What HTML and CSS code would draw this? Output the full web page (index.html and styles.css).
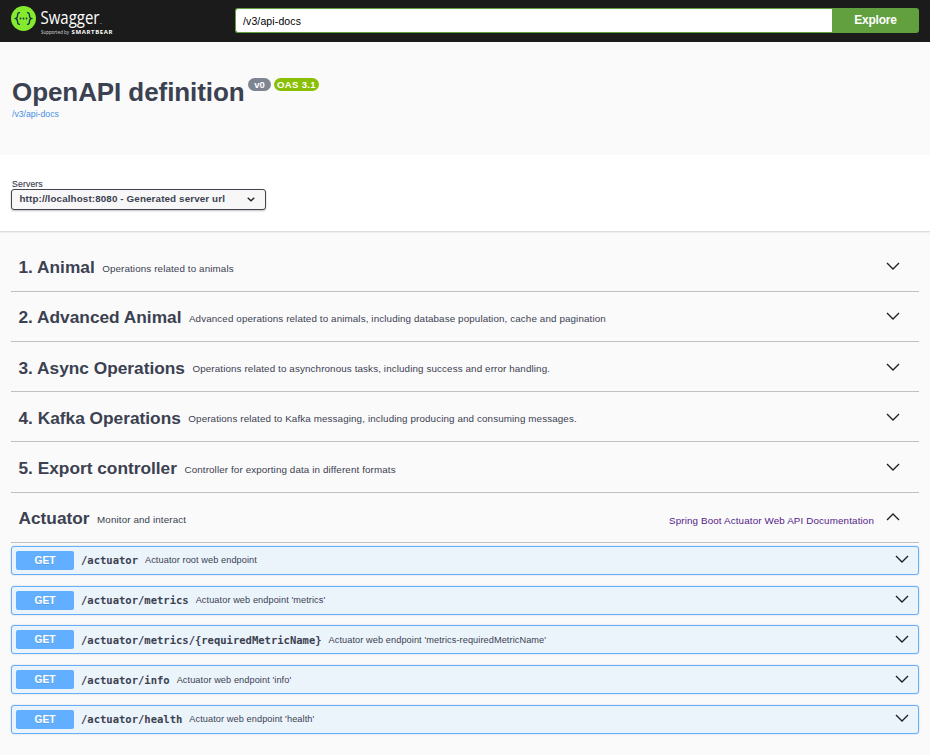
FILE: index.html
```html
<!DOCTYPE html>
<html lang="en">
<head>
<meta charset="utf-8">
<title>Swagger UI</title>
<link rel="stylesheet" href="styles.css">
</head>
<body>
<svg class="defs" width="0" height="0"><symbol id="chevron" viewBox="0 0 14 8"><path d="M1 1l6 6 6-6" fill="none" stroke="#202124" stroke-width="1.35"/></symbol></svg>
<header class="topbar">
  <svg class="logo" width="104" height="36" viewBox="0 0 104 36">
    <circle cx="12.5" cy="14.5" r="12.5" fill="#85ea2d"/>
    <g fill="none" stroke="#173647" stroke-width="1.35">
      <path d="M9 8.7c-2-.1-2.4.7-2.4 2.2 0 2.2-.1 3-1.8 3.6 1.7.6 1.8 1.4 1.8 3.6 0 1.5.4 2.3 2.4 2.2M16 8.7c2-.1 2.4.7 2.4 2.2 0 2.2.1 3 1.8 3.6-1.7.6-1.8 1.4-1.8 3.6 0 1.5-.4 2.3-2.4 2.2"/>
    </g>
    <g fill="#173647"><circle cx="9.5" cy="14.5" r=".9"/><circle cx="12.500" cy="14.5" r=".9"/><circle cx="15.5" cy="14.5" r=".9"/></g>
    <text class="brand" x="29.5" y="20" textLength="59" lengthAdjust="spacingAndGlyphs">Swagger</text>
    <circle cx="90" cy="19.5" r=".6" fill="#aaa"/>
    <text class="support" x="30" y="29.5" textLength="28" lengthAdjust="spacingAndGlyphs">Supported by</text>
    <text class="bear" x="60.5" y="29.5" textLength="41" lengthAdjust="spacing">SMARTBEAR</text>
  </svg>
  <form class="search"><input class="url" type="text" value="/v3/api-docs" aria-label="Definition URL"><button class="explore" type="button">Explore</button></form>
</header>
<section class="info">
  <h1 class="title">OpenAPI definition</h1><span class="badge version">v0</span><span class="badge oas">OAS 3.1</span>
  <a class="doc-link">/v3/api-docs</a>
</section>
<section class="servers">
  <span class="servers-label">Servers</span>
  <div class="select"><span>http://localhost:8080 - Generated server url</span><svg width="8" height="5" viewBox="0 0 8 5"><path d="M.7.7l3.300 3 3.300-3" fill="none" stroke="#222" stroke-width="1.4"/></svg></div>
</section>
<main class="tags">
  <div class="tag"><h2>1. Animal</h2><p>Operations related to animals</p><svg class="chev"><use href="#chevron"/></svg></div>
  <div class="tag"><h2>2. Advanced Animal</h2><p>Advanced operations related to animals, including database population, cache and pagination</p><svg class="chev"><use href="#chevron"/></svg></div>
  <div class="tag"><h2>3. Async Operations</h2><p>Operations related to asynchronous tasks, including success and error handling.</p><svg class="chev"><use href="#chevron"/></svg></div>
  <div class="tag"><h2>4. Kafka Operations</h2><p>Operations related to Kafka messaging, including producing and consuming messages.</p><svg class="chev"><use href="#chevron"/></svg></div>
  <div class="tag"><h2>5. Export controller</h2><p>Controller for exporting data in different formats</p><svg class="chev"><use href="#chevron"/></svg></div>
  <div class="tag"><h2>Actuator</h2><p>Monitor and interact</p><a class="external">Spring Boot Actuator Web API Documentation</a><svg class="chev up"><use href="#chevron"/></svg></div>
  <div class="operations">
    <div class="op"><b class="method">GET</b><code>/actuator</code><span class="summary">Actuator root web endpoint</span><svg class="chev"><use href="#chevron"/></svg></div>
    <div class="op"><b class="method">GET</b><code>/actuator/metrics</code><span class="summary">Actuator web endpoint 'metrics'</span><svg class="chev"><use href="#chevron"/></svg></div>
    <div class="op"><b class="method">GET</b><code>/actuator/metrics/{requiredMetricName}</code><span class="summary">Actuator web endpoint 'metrics-requiredMetricName'</span><svg class="chev"><use href="#chevron"/></svg></div>
    <div class="op"><b class="method">GET</b><code>/actuator/info</code><span class="summary">Actuator web endpoint 'info'</span><svg class="chev"><use href="#chevron"/></svg></div>
    <div class="op"><b class="method">GET</b><code>/actuator/health</code><span class="summary">Actuator web endpoint 'health'</span><svg class="chev"><use href="#chevron"/></svg></div>
  </div>
</main>
</body>
</html>
```
FILE: styles.css
```css
* { box-sizing: border-box; }
body { margin: 0; height: 755px; overflow: hidden; background: #fafafa; color: #3b4151; font-family: "Liberation Sans", Arial, sans-serif; }
h1, h2, p { margin: 0; }
.defs { position: absolute; }
.topbar { height: 42px; background: #1b1b1b; display: flex; align-items: flex-start; padding: 4px 11px 0; }
.logo { display: block; flex: none; }
.brand { font: 17.5px "Open Sans", sans-serif; fill: #fff; }
.support { font: 5px "Open Sans", sans-serif; fill: #ddd; }
.bear { font: bold 6px "Open Sans", sans-serif; fill: #fff; }
.search { display: flex; width: 684px; margin: 4px 0 0 auto; height: 25px; }
.url { flex: 1; min-width: 0; border: 1px solid #62a03f; border-width: 1px 0 1px 1px; border-radius: 3px 0 0 3px; padding: 0 7px; font: 10.5px "Liberation Sans", sans-serif; letter-spacing: .12px; color: #000; background: #fff; }
.explore { width: 87px; border: 0; border-radius: 0 3px 3px 0; background: #62a03f; color: #fff; font: bold 12px "Liberation Sans", sans-serif; letter-spacing: -.2px; padding: 0 0 2px; }
.info { height: 113px; padding: 33px 12px 0; display: grid; grid-template-columns: 232px auto auto 1fr; grid-template-rows: 34px 12px; align-items: start; }
.title { font-size: 26px; line-height: 34px; white-space: nowrap; letter-spacing: -.08px; }
.badge { margin: 3px 0 0 4px; height: 13px; line-height: 13px; border-radius: 7px; color: #fff; font-size: 9.5px; font-weight: bold; text-align: center; }
.version { width: 23px; background: #7d8492; }
.oas { width: 45px; margin-left: 3px; background: #89bf04; letter-spacing: .35px; }
.doc-link { grid-column: 1; font-size: 8.7px; line-height: 12px; margin-top: -1px; color: #4990e2; }
.servers { height: 77px; background: #fff; border-bottom: 1px solid #dedede; padding: 24px 11px 0; box-shadow: 0 1px 1px rgba(0,0,0,.04); }
.servers-label { display: block; font-size: 8.7px; line-height: 10px; margin-left: 1px; letter-spacing: .13px; -webkit-text-stroke: .15px #3b4151; }
.select { width: 255px; height: 21px; border: 1px solid #41444e; border-radius: 3px; background: #f7f7f7; display: flex; align-items: center; justify-content: space-between; padding: 0 10px 1px 7.5px; font-size: 9.8px; letter-spacing: .13px; font-weight: bold; box-shadow: 0 1px 2px rgba(0,0,0,.25); }
.select span { margin-top: -1px; }
.tags { padding: 9.7px 11px 0; }
.tag { height: 50.2px; border-bottom: 1px solid #bfc0c3; display: flex; align-items: center; padding: 2px 19px 0 7.5px; white-space: nowrap; }
.tag h2 { font-size: 17.3px; line-height: 24px; margin-right: 7.5px; }
.tag p { font-size: 9.8px; letter-spacing: .122px; margin-top: 2px; }
.chev { width: 14px; height: 8px; margin-left: auto; flex: none; }
.tag .chev { margin-top: -2px; }
.external { font-size: 9.8px; letter-spacing: .14px; color: #551a8b; margin: 5px 12px 0 auto; }
.tag .up { margin-left: 0; transform: rotate(180deg); }
.operations { padding-top: 3px; display: flex; flex-direction: column; gap: 10.75px; }
.op { height: 29px; border: 1px solid #61affe; border-radius: 3px; background: #ebf3fb; box-shadow: 0 0 2px rgba(0,0,0,.19); display: flex; align-items: center; padding: 0 9px 0 4px; white-space: nowrap; }
.method { width: 58px; height: 19px; line-height: 19px; border-radius: 2px; background: #61affe; color: #fff; font-size: 10.2px; text-align: center; text-shadow: 0 1px 0 rgba(0,0,0,.1); }
.op code { font: bold 10.52px "DejaVu Sans Mono", monospace; margin-left: 7px; }
.summary { font-size: 9.2px; letter-spacing: .083px; margin-left: 7px; }
.op .chev { margin-top: -2px; }
```
